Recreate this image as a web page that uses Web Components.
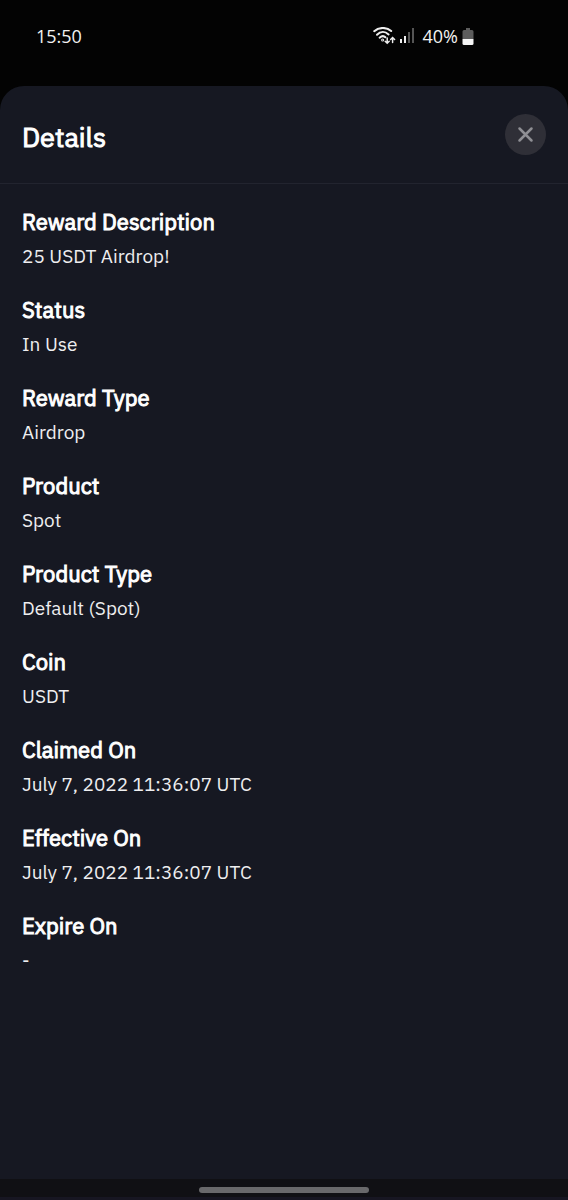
<!DOCTYPE html>
<html lang="en">
<head>
<meta charset="utf-8">
<meta name="viewport" content="width=device-width, initial-scale=1">
<title>Details</title>
<style>
  body { margin: 0; background: #161822; }
</style>
</head>
<body>
<app-screen>
  <status-bar slot="status" time="15:50" battery="40%"></status-bar>
  <detail-sheet heading="Details">
    <detail-item label="Reward Description">25 USDT Airdrop!</detail-item>
    <detail-item label="Status">In Use</detail-item>
    <detail-item label="Reward Type">Airdrop</detail-item>
    <detail-item label="Product">Spot</detail-item>
    <detail-item label="Product Type">Default (Spot)</detail-item>
    <detail-item label="Coin">USDT</detail-item>
    <detail-item label="Claimed On">July 7, 2022 11:36:07 UTC</detail-item>
    <detail-item label="Effective On">July 7, 2022 11:36:07 UTC</detail-item>
    <detail-item label="Expire On">-</detail-item>
  </detail-sheet>
  <gesture-bar slot="nav"></gesture-bar>
</app-screen>
<script>
class BaseElement extends HTMLElement {
  connectedCallback() {
    if (this.shadowRoot) return;
    this.attachShadow({ mode: "open" }).innerHTML = this.template();
  }
}

customElements.define("app-screen", class extends BaseElement {
  template() {
    return `
      <style>
        :host {
          display: flex; flex-direction: column; min-height: 100vh;
          background: #030303; color: #fff;
          font-family: "IBM Plex Sans", Roboto, sans-serif;
        }
        main { flex: 1; display: flex; flex-direction: column; }
      </style>
      <slot name="status"></slot>
      <main><slot></slot></main>
      <slot name="nav"></slot>`;
  }
});

customElements.define("status-bar", class extends BaseElement {
  template() {
    return `
      <style>
        :host {
          display: flex; justify-content: space-between; align-items: center;
          height: 72px; margin-bottom: 14px; padding: 0 94px 0 36px;
          font: 400 18px/24px "Open Sans", sans-serif; color: #f2f2f2;
        }
        .icons { display: flex; align-items: center; gap: 4px; }
        svg { display: block; }
        .signal { margin-right: 4px; }
      </style>
      <span>${this.getAttribute("time")}</span>
      <div class="icons">
        <svg width="23" height="18" viewBox="0 0 23 18" fill="none" stroke="#eee" stroke-width="2" stroke-linecap="round" aria-hidden="true">
          <path d="M1.2 4.200C6 -.1 13.600 -.1 18.200 4"/>
          <path d="M4 7.700C7.500 4.200 12 4.200 15.600 7.400"/>
          <path d="M6.600 10.700C8.600 8.900 11 8.900 12.400 10.300"/>
          <circle cx="9.600" cy="13" r=".5"/>
          <path stroke-width="1.500" d="M14.200 11v5M12.200 14.200l2 2 2-2M19.600 15.500v-5M17.600 12.500l2-2 2 2"/>
        </svg>
        <svg class="signal" width="15" height="18" viewBox="0 0 15 18" aria-hidden="true">
          <path fill="#eee" d="M0 12h2v4H0zM4 9h2v7H4z"/>
          <path fill="#555" d="M8 5h2v11H8zM12 1h2v15h-2z"/>
        </svg>
        <span>${this.getAttribute("battery")}</span>
        <svg width="12" height="17" viewBox="0 0 12 17" aria-hidden="true">
          <path fill="#5c5c5c" d="M4 0h4v2h2q1.500 0 1.500 1.500V11H.5V3.500Q.5 2 2 2h2z"/>
          <path fill="#f4f4f4" d="M.5 11h11v4.500q0 1.500-1.500 1.500H2Q.5 17 .5 15.500z"/>
        </svg>
      </div>`;
  }
});

customElements.define("detail-sheet", class extends BaseElement {
  template() {
    return `
      <style>
        :host {
          flex: 1; display: flex; flex-direction: column;
          background: #161822; border-radius: 24px 24px 0 0;
        }
        header {
          display: flex; justify-content: space-between; align-items: center;
          padding: 28px 22px; border-bottom: 1px solid #22242f;
        }
        h1 { margin: 0; padding-top: 5px; font-size: 27px; line-height: 36px; font-weight: 400; -webkit-text-stroke: 1px; }
        button {
          display: grid; place-items: center; width: 41px; height: 41px;
          padding: 0; border: 0; border-radius: 50%; background: #2f2f37; color: #8f8f94;
        }
        dl { margin: 0; padding: 21px 22px; }
      </style>
      <header>
        <h1>${this.getAttribute("heading")}</h1>
        <button type="button" aria-label="Close">
          <svg width="17" height="17" viewBox="0 0 17 17" fill="none" stroke="currentColor" stroke-width="2.500" stroke-linecap="round"><path d="M2.500 2.500l12 12M14.500 2.500L2.500 14.500"/></svg>
        </button>
      </header>
      <dl><slot></slot></dl>`;
  }
});

customElements.define("detail-item", class extends BaseElement {
  template() {
    return `
      <style>
        :host { display: block; margin-bottom: 20px; }
        dt { font-size: 22px; line-height: 34px; font-weight: 400; -webkit-text-stroke: 1px; }
        dd { margin: 0; font-size: 19px; line-height: 34px; color: #eeeef0; }
      </style>
      <dt>${this.getAttribute("label")}</dt>
      <dd><slot></slot></dd>`;
  }
});

customElements.define("gesture-bar", class extends BaseElement {
  template() {
    return `
      <style>
        :host {
          display: flex; justify-content: center; padding: 8px 0 4px;
          background: #101014; border-bottom: 3px solid #171622;
        }
        span { width: 30%; height: 6px; border-radius: 3px; background: #69696b; }
      </style>
      <span></span>`;
  }
});
</script>
</body>
</html>
